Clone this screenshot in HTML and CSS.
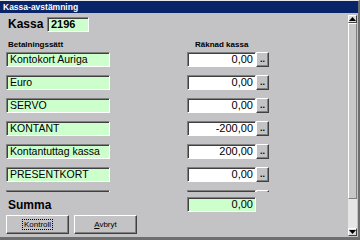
FILE: index.html
```html
<!DOCTYPE html>
<html>
<head>
<meta charset="utf-8">
<link rel="stylesheet" href="styles.css">
</head>
<body>
<div class="window">
  <div class="titlebar">Kassa-avstämning</div>
  <div class="client">
    <div class="main">
      <div class="kassa-row">
        <span class="kassa-label">Kassa</span>
        <div class="field green kassa-field">2196</div>
      </div>
      <div class="heads">
        <span class="head-left">Betalningssätt</span>
        <span class="head-right">Räknad kassa</span>
      </div>
      <div class="rows">
        <div class="row"><div class="field green name">Kontokort Auriga</div><div class="field white amount">0,00</div><div class="dots">..</div></div>
        <div class="row"><div class="field green name">Euro</div><div class="field white amount">0,00</div><div class="dots">..</div></div>
        <div class="row"><div class="field green name">SERVO</div><div class="field white amount">0,00</div><div class="dots">..</div></div>
        <div class="row"><div class="field green name">KONTANT</div><div class="field white amount">-200,00</div><div class="dots">..</div></div>
        <div class="row"><div class="field green name">Kontantuttag kassa</div><div class="field white amount">200,00</div><div class="dots">..</div></div>
        <div class="row"><div class="field green name">PRESENTKORT</div><div class="field white amount">0,00</div><div class="dots">..</div></div>
        <div class="row"><div class="field green name"></div><div class="field white amount"></div><div class="dots"></div></div>
      </div>
      <div class="summa-row">
        <span class="summa-label">Summa</span>
        <div class="field green summa-field">0,00</div>
      </div>
      <div class="buttons">
        <button class="btn"><span class="focus">Kontroll</span></button>
        <button class="btn"><span><u>A</u>vbryt</span></button>
      </div>
    </div>
    <div class="scrollbar">
      <div class="sb-btn"><svg width="7" height="4" viewBox="0 0 7 4"><path d="M3.5 0 L7 4 L0 4 Z" fill="#000"/></svg></div>
      <div class="sb-thumb"></div>
      <div class="sb-track"></div>
      <div class="sb-btn"><svg width="7" height="4" viewBox="0 0 7 4"><path d="M0 0 L7 0 L3.5 4 Z" fill="#000"/></svg></div>
    </div>
  </div>
</div>
</body>
</html>
```
FILE: styles.css
```css
html, body {
  margin: 0;
  padding: 0;
  background: #c3c3c6;
}
.window {
  width: 360px;
  height: 240px;
  box-sizing: border-box;
  background: #c3c3c6;
  border-top: 1px solid #e8e8e8;
  border-right: 2px solid #6e6e6e;
  border-bottom: 3px solid #6e6e6e;
  display: flex;
  flex-direction: column;
  font-family: "Liberation Sans", Arial, sans-serif;
  color: #000;
  overflow: hidden;
}
.titlebar {
  height: 12px;
  line-height: 12px;
  background: #0a246a;
  color: #fff;
  font-weight: bold;
  font-size: 8.5px;
  padding-left: 3px;
  flex: none;
}
.client {
  flex: 1;
  display: flex;
  min-height: 0;
}
.main {
  flex: 1;
  padding-left: 6px;
  display: flex;
  flex-direction: column;
}
.kassa-row {
  display: flex;
  align-items: center;
  margin-top: 3px;
  height: 16px;
  flex: none;
}
.kassa-label {
  flex: none;
  font-size: 12px;
  font-weight: bold;
  box-sizing: border-box;
  padding-left: 2px;
  width: 41px;
}
.field {
  box-sizing: border-box;
  height: 15px;
  flex: none;
  border-top: 1px solid #808080;
  border-left: 1px solid #808080;
  border-right: 1px solid #fff;
  border-bottom: 1px solid #fff;
  box-shadow: inset 1px 1px 0 #404040;
  font-size: 11px;
  line-height: 13px;
  padding: 0 2px 0 3px;
  white-space: nowrap;
  overflow: hidden;
}
.green { background: #ccffcc; }
.white { background: #fff; }
.kassa-field {
  width: 42px;
  font-weight: bold;
}
.heads {
  display: flex;
  height: 10px;
  margin-top: 8px;
  font-size: 8px;
  font-weight: bold;
  line-height: 10px;
  flex: none;
}
.head-left { padding-left: 2px; width: 187px; }
.rows {
  margin-top: 2px;
  height: 140px;
  overflow: hidden;
  display: flex;
  flex-direction: column;
  gap: 8px;
  flex: none;
}
.row {
  display: flex;
  height: 15px;
  flex: none;
}
.name { width: 104px; font-size: 10.5px; }
.amount {
  width: 69px;
  margin-left: 77px;
  text-align: right;
}
.dots {
  box-sizing: border-box;
  flex: none;
  width: 13px;
  height: 15px;
  background: #c3c3c6;
  border-top: 1px solid #fff;
  border-left: 1px solid #fff;
  border-right: 1px solid #404040;
  border-bottom: 1px solid #404040;
  box-shadow: inset -1px -1px 0 #808080;
  font-size: 9px;
  line-height: 12px;
  text-align: center;
  font-weight: bold;
}
.summa-row {
  display: flex;
  align-items: center;
  margin-top: 5px;
  height: 15px;
  flex: none;
}
.summa-label {
  flex: none;
  box-sizing: border-box;
  font-size: 12px;
  font-weight: bold;
  width: 181px;
  padding-left: 2px;
}
.summa-field {
  width: 69px;
  text-align: right;
}
.buttons {
  display: flex;
  gap: 5px;
  margin-top: 3px;
  flex: none;
}
.btn {
  box-sizing: border-box;
  width: 63px;
  height: 19px;
  margin: 0;
  padding: 0;
  background: #c3c3c6;
  border-top: 1px solid #fff;
  border-left: 1px solid #fff;
  border-right: 1px solid #404040;
  border-bottom: 1px solid #404040;
  box-shadow: inset -1px -1px 0 #808080;
  font-family: "Liberation Sans", Arial, sans-serif;
  font-size: 8px;
  color: #000;
}
.focus {
  outline: 1px dotted #000;
  padding: 0 1px;
}
.scrollbar {
  width: 9px;
  margin-right: 1px;
  margin-top: 2px;
  margin-bottom: 1px;
  display: flex;
  flex-direction: column;
  background: #e4e4e4;
}
.sb-btn {
  box-sizing: border-box;
  height: 8px;
  flex: none;
  background: #dcdcdc;
  border-top: 1px solid #fff;
  border-left: 1px solid #fff;
  border-right: 1px solid #404040;
  border-bottom: 1px solid #404040;
  display: flex;
  align-items: center;
  justify-content: center;
}
.sb-btn svg { display: block; }
.sb-thumb {
  box-sizing: border-box;
  height: 176px;
  flex: none;
  background: #c8c8c8;
  border-top: 1px solid #fff;
  border-left: 1px solid #fff;
  border-right: 1px solid #808080;
  border-bottom: 1px solid #808080;
}
.sb-track {
  flex: 1;
  background: #e6e6e6;
}
```
